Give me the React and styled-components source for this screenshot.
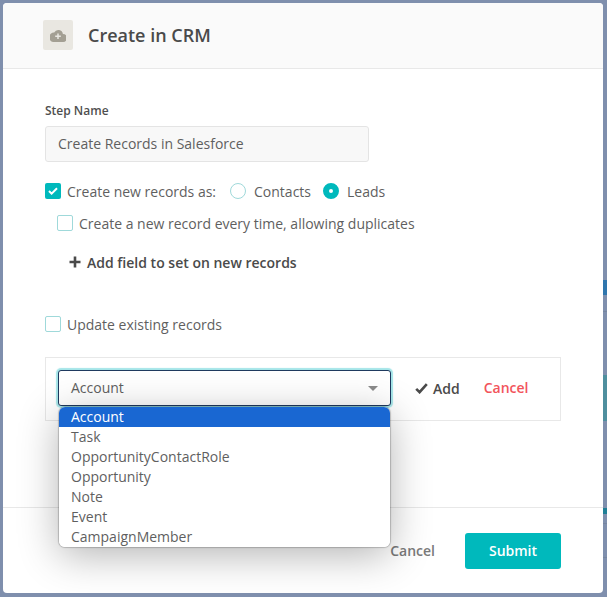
import React from "react";
import styled, { createGlobalStyle } from "styled-components";

const GlobalStyle = createGlobalStyle`
  html, body {
    margin: 0;
    padding: 0;
    width: 607px;
    height: 597px;
    overflow: hidden;
    background: #7f8fad;
    font-family: "Open Sans", sans-serif;
    color: #555;
  }
`;

const Backdrop = styled.div`
  width: 607px;
  height: 597px;
  box-sizing: border-box;
  padding: 3px 0 4px 3px;
  display: flex;
`;

// the page behind the modal, only a thin strip of it shows on the right
const BehindStrip = styled.div`
  width: 4px;
  flex: none;
  margin-top: -3px;
  display: flex;
  flex-direction: column;
`;

const BehindPiece = styled.div`
  height: ${(p) => p.$h}px;
  flex: none;
  background: ${(p) => p.$color || "transparent"};
`;

const Modal = styled.div`
  width: 600px;
  height: 590px;
  flex: none;
  background: #fff;
  border-radius: 4px;
  display: flex;
  flex-direction: column;
  overflow: hidden;
`;

const Header = styled.div`
  height: 66px;
  box-sizing: border-box;
  flex: none;
  background: #fafafa;
  border-bottom: 1px solid #e8e8e8;
  display: flex;
  align-items: center;
  padding: 0 40px 1px;
  gap: 15px;
`;

const HeaderIcon = styled.div`
  width: 30px;
  height: 30px;
  border-radius: 2px;
  background: #e9e7e1;
  display: flex;
  align-items: center;
  justify-content: center;
`;

const HeaderTitle = styled.h1`
  margin: 0;
  font-size: 18px;
  font-weight: 600;
  color: #4a4a4a;
`;

const Body = styled.div`
  flex: 1;
  padding: 34px 42px 0;
  display: flex;
  flex-direction: column;
`;

const FieldLabel = styled.label`
  font-size: 12px;
  font-weight: 600;
  line-height: 16px;
  color: #4f4f4f;
  margin-bottom: 7px;
`;

const TextInput = styled.div`
  width: 324px;
  height: 36px;
  box-sizing: border-box;
  border: 1px solid #e4e4e4;
  border-radius: 3px;
  background: #f8f8f8;
  padding: 0 12px;
  font-size: 14px;
  line-height: 34px;
  color: #5f5f5f;
`;

const Row = styled.div`
  display: flex;
  align-items: center;
  height: 20px;
  font-size: 14px;
  color: #5f5f5f;
  margin-top: ${(p) => p.$top || 0}px;
  margin-left: ${(p) => p.$left || 0}px;
`;

const Box = styled.span`
  width: 16px;
  height: 16px;
  box-sizing: border-box;
  flex: none;
  border-radius: 2px;
  border: ${(p) => (p.$checked ? "none" : "1px solid #9fd9da")};
  background: ${(p) => (p.$checked ? "#00b9bc" : "#fff")};
  margin-right: 6px;
  display: flex;
  align-items: center;
  justify-content: center;
`;

const Radio = styled.span`
  width: 16px;
  height: 16px;
  box-sizing: border-box;
  flex: none;
  border-radius: 50%;
  border: ${(p) => (p.$checked ? "6px solid #00b9bc" : "1px solid #9fd9da")};
  background: #fff;
  margin-left: ${(p) => p.$left}px;
  margin-right: 8px;
`;

const AddField = styled.div`
  display: flex;
  align-items: center;
  gap: 6px;
  height: 20px;
  margin: 19px 0 0 24px;
  font-size: 14px;
  font-weight: 600;
  color: #4a4a4a;
`;

const Panel = styled.div`
  width: 516px;
  height: 64px;
  box-sizing: border-box;
  margin-top: 23px;
  border: 1px solid #e8e8e8;
  display: flex;
  align-items: flex-start;
  padding: 12px 12px 0;
`;

const SelectWrap = styled.div`
  position: relative;
  width: 333px;
  flex: none;
`;

const Select = styled.div`
  height: 36px;
  box-sizing: border-box;
  border: 1px solid #1f3a5f;
  border-radius: 3px;
  box-shadow: 0 0 1px 2px #a4e5e8;
  background: #fff;
  padding: 0 12px 2px;
  display: flex;
  align-items: center;
  justify-content: space-between;
  font-size: 14px;
  color: #5f5f5f;
`;

const Caret = styled.span`
  width: 0;
  height: 0;
  border-left: 5px solid transparent;
  border-right: 5px solid transparent;
  border-top: 5px solid #8b8b8b;
  margin-top: 3px;
`;

const Menu = styled.ul`
  position: absolute;
  top: 37px;
  left: 1px;
  width: 331px;
  box-sizing: border-box;
  margin: 0;
  padding: 0;
  list-style: none;
  background: #fff;
  border-radius: 6px;
  overflow: hidden;
  box-shadow: 0 0 1px 1px rgba(0, 0, 0, 0.2), 0 8px 40px rgba(0, 0, 0, 0.3);
`;

const MenuItem = styled.li`
  height: 20px;
  line-height: 20px;
  padding-left: 12px;
  font-size: 14px;
  color: ${(p) => (p.$active ? "#fff" : "#5f5f5f")};
  background: ${(p) => (p.$active ? "#1967d2" : "#fff")};
`;

const PanelAdd = styled.div`
  display: flex;
  align-items: center;
  gap: 5px;
  height: 36px;
  margin-left: 24px;
  font-size: 14px;
  font-weight: 600;
  color: #4a4a4a;
`;

const PanelCancel = styled.div`
  height: 36px;
  line-height: 36px;
  margin-left: 24px;
  font-size: 14px;
  font-weight: 600;
  color: #f2545b;
`;

const Footer = styled.div`
  height: 86px;
  flex: none;
  box-sizing: border-box;
  border-top: 1px solid #e8e8e8;
  display: flex;
  align-items: center;
  justify-content: flex-end;
  padding: 0 42px 0 0;
`;

const FooterCancel = styled.div`
  font-size: 14px;
  font-weight: 600;
  color: #7a7a7a;
  margin-right: 30px;
`;

const SubmitButton = styled.button`
  width: 96px;
  height: 36px;
  border: none;
  border-radius: 3px;
  background: #00b9bc;
  color: #fff;
  font-family: "Open Sans", sans-serif;
  font-size: 14px;
  font-weight: 600;
`;

const options = [
  "Account",
  "Task",
  "OpportunityContactRole",
  "Opportunity",
  "Note",
  "Event",
  "CampaignMember",
];

const behind = [
  { h: 280 },
  { h: 15, color: "#2f76ad" },
  { h: 16 },
  { h: 1, color: "#76859f" },
  { h: 63 },
  { h: 46, color: "#4f8f9e" },
  { h: 87 },
  { h: 6, color: "#1f7f96" },
  { h: 9 },
  { h: 1, color: "#76859f" },
  { h: 33 },
  { h: 1, color: "#76859f" },
];

export default function App() {
  return (
    <>
      <GlobalStyle />
      <Backdrop>
        <Modal>
          <Header>
            <HeaderIcon>
              <svg width="16" height="13" viewBox="0 0 16 13">
                <path
                  fill="#a39f93"
                  d="M12.9 5A4.6 4.6 0 0 0 4.2 3.6 3.6 3.6 0 0 0 3.6 13h9a3.9 3.9 0 0 0 .3-8z"
                />
                <path
                  stroke="#e9e7e1"
                  strokeWidth="1.5"
                  d="M8 4.4v5.6M5.2 7.2h5.6"
                />
              </svg>
            </HeaderIcon>
            <HeaderTitle>Create in CRM</HeaderTitle>
          </Header>
          <Body>
            <FieldLabel>Step Name</FieldLabel>
            <TextInput>Create Records in Salesforce</TextInput>
            <Row $top={19}>
              <Box $checked>
                <svg width="10" height="8" viewBox="0 0 10 8">
                  <path
                    d="M1 4l2.6 2.6L9 1.2"
                    fill="none"
                    stroke="#fff"
                    strokeWidth="2"
                  />
                </svg>
              </Box>
              Create new records as:
              <Radio $left={14} />
              Contacts
              <Radio $left={12} $checked />
              Leads
            </Row>
            <Row $top={12} $left={12}>
              <Box />
              Create a new record every time, allowing duplicates
            </Row>
            <AddField>
              <svg width="12" height="12" viewBox="0 0 12 12">
                <path d="M6 .5v11M.5 6h11" stroke="#4a4a4a" strokeWidth="2.6" />
              </svg>
              Add field to set on new records
            </AddField>
            <Row $top={42}>
              <Box />
              Update existing records
            </Row>
            <Panel>
              <SelectWrap>
                <Select>
                  Account
                  <Caret />
                </Select>
                <Menu>
                  {options.map((o, i) => (
                    <MenuItem key={o} $active={i === 0}>
                      {o}
                    </MenuItem>
                  ))}
                </Menu>
              </SelectWrap>
              <PanelAdd>
                <svg width="13" height="11" viewBox="0 0 13 11">
                  <path
                    d="M1.2 5.8l3.4 3.4L11.8 1.2"
                    fill="none"
                    stroke="#4a4a4a"
                    strokeWidth="2.6"
                  />
                </svg>
                Add
              </PanelAdd>
              <PanelCancel>Cancel</PanelCancel>
            </Panel>
          </Body>
          <Footer>
            <FooterCancel>Cancel</FooterCancel>
            <SubmitButton>Submit</SubmitButton>
          </Footer>
        </Modal>
        <BehindStrip>
          {behind.map((b, i) => (
            <BehindPiece key={i} $h={b.h} $color={b.color} />
          ))}
        </BehindStrip>
      </Backdrop>
    </>
  );
}
